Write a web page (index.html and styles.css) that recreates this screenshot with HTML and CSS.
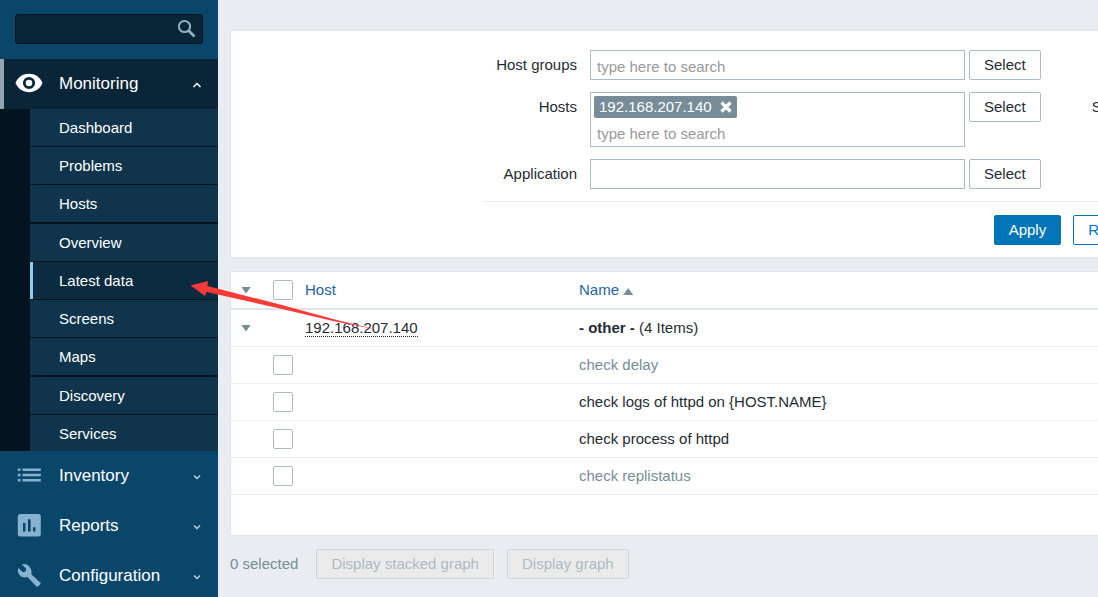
FILE: index.html
```html
<!DOCTYPE html>
<html lang="en">
<head>
<meta charset="utf-8">
<title>Latest data</title>
<link rel="stylesheet" href="styles.css">
</head>
<body>
<div class="page">
  <aside class="sidebar">
    <form class="search">
      <input class="search-input" type="text" aria-label="Search">
      <button class="search-button" type="button" aria-label="Search">
        <svg width="20" height="20" viewBox="0 0 20 20"><circle cx="7.5" cy="7.5" r="5.6" fill="none" stroke="#8fb0c5" stroke-width="2"/><path d="M11.5 11.5L17.5 17.5" stroke="#8fb0c5" stroke-width="2.8"/></svg>
      </button>
    </form>
    <nav class="menu">
      <a class="menu-head menu-head-open" href="#">
        <svg class="menu-icon" width="30" height="22" viewBox="0 0 30 22"><path d="M1.500 10C4 4 9 .8 15 .8S26 4 28.500 10C26 16 21 19.200 15 19.200S4 16 1.500 10z" fill="#fff"/><circle cx="15" cy="10" r="4.700" fill="#fff" stroke="#0a2537" stroke-width="2.800"/></svg>
        <span class="menu-label">Monitoring</span>
        <svg class="chevron" width="10" height="8" viewBox="0 0 10 8"><path d="M1.500 7L5 3.500L8.500 7" fill="none" stroke="#fff" stroke-width="1.500"/></svg>
      </a>
      <ul class="submenu">
        <li><a href="#">Dashboard</a></li>
        <li><a href="#">Problems</a></li>
        <li><a href="#">Hosts</a></li>
        <li><a href="#">Overview</a></li>
        <li><a class="current" href="#">Latest data</a></li>
        <li><a href="#">Screens</a></li>
        <li><a href="#">Maps</a></li>
        <li><a href="#">Discovery</a></li>
        <li><a href="#">Services</a></li>
      </ul>
      <a class="menu-head" href="#">
        <svg class="menu-icon" width="24" height="24" viewBox="0 0 24 24" fill="#86b2d0"><path d="M.8 4.500h2.700v2.600H.8zM.8 9.700h2.700v2.600H.8zM.8 14.900h2.700v2.600H.8zM5.500 4.500h18.300v2.600H5.500zM5.500 9.700h18.300v2.600H5.500zM5.500 14.900h18.300v2.600H5.500z"/></svg>
        <span class="menu-label">Inventory</span>
        <svg class="chevron" width="10" height="8" viewBox="0 0 10 8"><path d="M2 3.500L5 6.500L8 3.500" fill="none" stroke="#b5d0e0" stroke-width="1.500"/></svg>
      </a>
      <a class="menu-head" href="#">
        <svg class="menu-icon" width="24" height="24" viewBox="0 0 24 24"><rect x=".8" y="0" width="23" height="22.500" rx="2.500" fill="#86b2d0"/><path d="M6 9h2.500v8.500H6zM11 5.200h2.600v12.300H11zM16 13.200h2.500v4.300H16z" fill="#0a466a"/></svg>
        <span class="menu-label">Reports</span>
        <svg class="chevron" width="10" height="8" viewBox="0 0 10 8"><path d="M2 3.500L5 6.500L8 3.500" fill="none" stroke="#b5d0e0" stroke-width="1.500"/></svg>
      </a>
      <a class="menu-head" href="#">
        <svg class="menu-icon" width="24" height="24" viewBox="0 0 24 24" fill="#86b2d0"><path d="M23.200 18.600L14.300 10.300C15 7.400 14.200 4.300 12 2.200 10 .2 7.500-.3 5 .4L9 4.600C9.500 6.800 8 8.300 5.600 8L1.400 4C.3 6.800 1 9.400 2.800 11.200 4.900 13.300 7.800 13.900 10.500 13L19.200 22.300C19.800 22.900 20.600 22.900 21.200 22.300L23.200 20.400C23.800 19.800 23.800 19.100 23.200 18.600z"/></svg>
        <span class="menu-label">Configuration</span>
        <svg class="chevron" width="10" height="8" viewBox="0 0 10 8"><path d="M2 3.500L5 6.500L8 3.500" fill="none" stroke="#b5d0e0" stroke-width="1.500"/></svg>
      </a>
    </nav>
  </aside>

  <main class="main">
    <div class="content">
      <form class="card filter">
        <div class="filter-body">
          <div class="filter-fields">
            <div class="field">
              <label class="field-label" for="groups">Host groups</label>
              <div class="multiselect"><input id="groups" class="plain-input" type="text" placeholder="type here to search"></div>
              <button class="button" type="button">Select</button>
            </div>
            <div class="field">
              <label class="field-label" for="hosts">Hosts</label>
              <div class="multiselect">
                <span class="tag">192.168.207.140
                  <button class="tag-remove" type="button" aria-label="Remove"><svg width="12" height="12" viewBox="0 0 12 12"><path d="M1.500 1.500L10.500 10.500M10.500 1.500L1.500 10.500" stroke="#fff" stroke-width="3.200"/></svg></button>
                </span>
                <input id="hosts" class="plain-input" type="text" placeholder="type here to search">
              </div>
              <button class="button" type="button">Select</button>
              <span class="side-label">Show items without data</span>
            </div>
            <div class="field">
              <label class="field-label" for="app">Application</label>
              <div class="multiselect"><input id="app" class="plain-input" type="text"></div>
              <button class="button" type="button">Select</button>
            </div>
          </div>
          <div class="filter-actions">
            <button class="button button-primary" type="button">Apply</button>
            <button class="button button-alt" type="button">Reset</button>
          </div>
        </div>
      </form>

      <div class="card results">
        <table class="table">
          <colgroup><col class="col-toggle"><col class="col-check"><col class="col-host"><col></colgroup>
          <thead>
            <tr>
              <th><button class="toggle" type="button" aria-label="Collapse all"></button></th>
              <th><input class="check" type="checkbox" aria-label="Select all"></th>
              <th><a class="link" href="#">Host</a></th>
              <th><a class="link" href="#">Name <span class="sort-up"></span></a></th>
            </tr>
          </thead>
          <tbody>
            <tr><td><button class="toggle" type="button" aria-label="Collapse"></button></td><td></td><td><a class="host-link" href="#">192.168.207.140</a></td><td><b>- other -</b> (4 Items)</td></tr>
            <tr><td></td><td><input class="check" type="checkbox" aria-label="check delay"></td><td></td><td class="grey">check delay</td></tr>
            <tr><td></td><td><input class="check" type="checkbox" aria-label="check logs of httpd"></td><td></td><td>check logs of httpd on {HOST.NAME}</td></tr>
            <tr><td></td><td><input class="check" type="checkbox" aria-label="check process of httpd"></td><td></td><td>check process of httpd</td></tr>
            <tr><td></td><td><input class="check" type="checkbox" aria-label="check replistatus"></td><td></td><td class="grey">check replistatus</td></tr>
          </tbody>
        </table>
      </div>

      <div class="footer-actions">
        <span class="selected-count">0 selected</span>
        <button class="button" type="button" disabled>Display stacked graph</button>
        <button class="button" type="button" disabled>Display graph</button>
      </div>
    </div>
  </main>

  <svg class="pointer" width="200" height="50" viewBox="190 280 200 50"><path d="M190.500 285.500L208 281L207.500 286L280 304.500L333 319L376 329.500L333 321L280 308.500L206.500 292L205 296z" fill="#f93a37"/></svg>
</div>
</body>
</html>
```
FILE: styles.css
```css
* { box-sizing: border-box; }

body {
  margin: 0;
  background: #e9edf1;
  color: #1f2c33;
  font: 15px/20px "Liberation Sans", Arial, sans-serif;
}

button, input { font: inherit; color: inherit; }
a { color: inherit; text-decoration: none; }

.page {
  position: relative;
  display: flex;
  height: 100vh;
  overflow: hidden;
}

/* Sidebar */
.sidebar {
  flex: none;
  width: 218px;
  background: #0a466a;
  color: #fff;
}

.search {
  display: flex;
  align-items: center;
  height: 30px;
  margin: 14px 15px 15px;
  padding-right: 5px;
  background: #0a2537;
  border: 1px solid #03131f;
  border-radius: 3px;
}

.search-input {
  flex: 1;
  width: 100%;
  min-width: 0;
  border: 0;
  background: none;
  outline: 0;
}

.search-button {
  display: flex;
  padding: 0;
  border: 0;
  background: none;
}

.menu-head {
  display: flex;
  align-items: center;
  height: 50px;
  padding-right: 16px;
  font-size: 17px;
}

.menu-head-open {
  background: #0a2537;
  box-shadow: inset 4px 0 #92a3ae;
}

.menu-icon { flex: none; }
.menu-head::before { content: ""; width: 17px; }
.menu-head-open::before { width: 14px; }
.menu-label { flex: 1; margin-left: 18px; }
.menu-head-open .menu-label { margin-left: 15px; }

.submenu {
  margin: 0;
  padding: 0 0 0 30px;
  list-style: none;
  background: #03131f;
}

.submenu a {
  display: block;
  height: 37px;
  padding: 9px 0 8px 29px;
  background: #0f344c;
}

.submenu li { border-bottom: 1px solid #03131f; }
.submenu li:nth-child(4n + 3) { border-bottom-width: 2px; }
.submenu li:last-child { border-bottom: 0; }
.submenu li:last-child a { height: 36px; }

.submenu .current {
  background: #0a2b40;
  box-shadow: inset 3px 0 #8ecbf0;
}

/* Content */
.main {
  flex: 1;
  min-width: 0;
  overflow: hidden;
}

.content {
  min-width: 1700px;
  padding: 30px 12px 0;
}

.card {
  background: #fff;
  border: 1px solid #dfe4e7;
}

.filter { margin-bottom: 13px; padding: 19px 0 12px; }

.filter-body {
  width: 1168px;
  margin: 0 auto;
}

.filter-fields {
  display: grid;
  gap: 12px;
  padding-bottom: 12px;
  border-bottom: 1px solid #ebeef0;
}

.field {
  display: flex;
  align-items: flex-start;
  gap: 4px;
}

.field-label {
  width: 93px;
  margin-right: 9px;
  padding-top: 5px;
  text-align: right;
}

.side-label { margin-left: 47px; padding-top: 5px; }

.multiselect {
  width: 375px;
  padding: 3px;
  border: 1px solid #acbbc2;
}

.plain-input {
  display: block;
  width: 100%;
  height: 22px;
  padding: 2px 3px 0;
  border: 0;
  outline: 0;
  background: none;
}

.plain-input::placeholder { color: #999; opacity: 1; }

.tag {
  display: flex;
  align-items: center;
  gap: 8px;
  width: max-content;
  height: 22px;
  margin-bottom: 3px;
  padding: 0 5px;
  border-radius: 2px;
  background: #768d99;
  color: #fff;
}

.tag-remove {
  display: flex;
  padding: 0;
  border: 0;
  background: none;
}

.button {
  height: 30px;
  padding: 0 14px;
  border: 1px solid #acbbc2;
  border-radius: 2px;
  background: #fff;
}

.button-primary { border-color: #0275b8; background: #0275b8; color: #fff; }
.button-alt { border-color: #0275b8; color: #0275b8; }
.button:disabled { border-color: #ccd5d9; background: #ebebeb; color: #acbbc2; }

.filter-actions {
  display: flex;
  justify-content: center;
  gap: 12px;
  padding-top: 13px;
}

.table {
  width: 100%;
  margin-bottom: 40px;
  table-layout: fixed;
  border-collapse: separate;
  border-spacing: 0;
}

.col-toggle { width: 35px; }
.col-check { width: 32px; }
.col-host { width: 274px; }

th, td {
  height: 37px;
  padding: 0 7px;
  border-bottom: 1px solid #ebeef0;
  font-weight: 400;
  text-align: left;
}

th { height: 38px; border-bottom: 2px solid #dfe4e7; }
.grey { color: #768d99; }
.link { color: #1f65a0; }

.toggle {
  display: block;
  width: 10px;
  height: 7px;
  margin-left: 3px;
  padding: 0;
  border: 0;
  background: #768d99;
  clip-path: polygon(0 0, 100% 0, 50% 100%);
}

.sort-up {
  display: inline-block;
  width: 10px;
  height: 7px;
  background: #768d99;
  clip-path: polygon(0 100%, 100% 100%, 50% 0);
}

.check {
  appearance: none;
  display: block;
  width: 20px;
  height: 20px;
  margin: 0;
  border: 1px solid #acbbc2;
  border-radius: 2px;
  background: #fff;
}

.host-link { border-bottom: 1px dotted #1f2c33; }

.footer-actions {
  display: flex;
  align-items: center;
  gap: 13px;
  padding-top: 13px;
}

.selected-count { margin-right: 5px; color: #768d99; }

/* Pointer drawn over the page */
.pointer {
  position: absolute;
  left: 190px;
  top: 280px;
  pointer-events: none;
}
```
